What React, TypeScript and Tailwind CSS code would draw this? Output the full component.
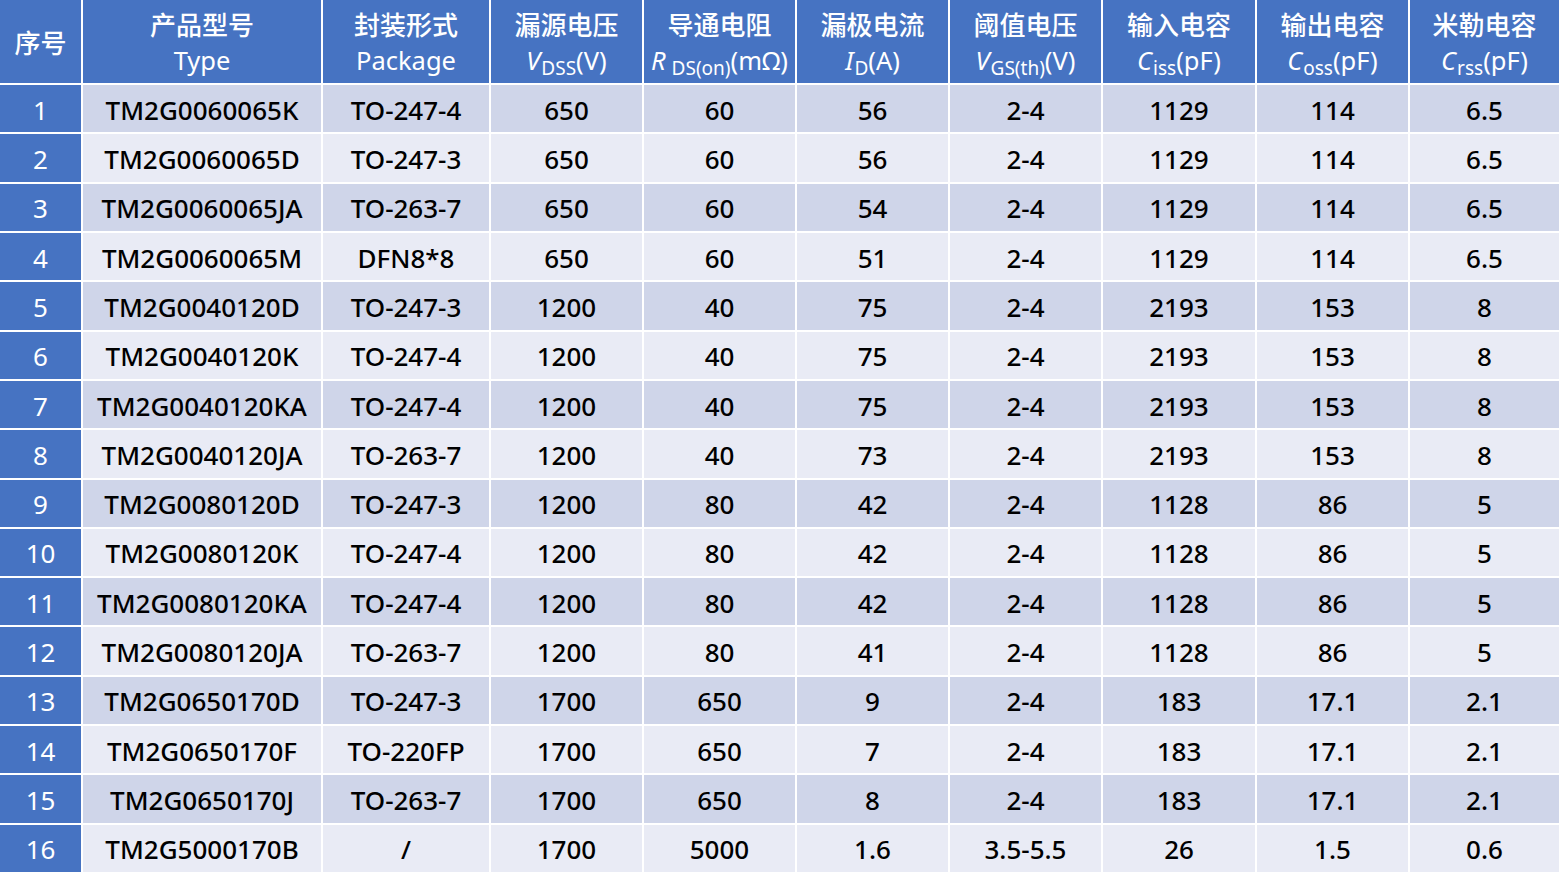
const ROWS: string[][] = [
  ['TM2G0060065K', 'TO-247-4', '650', '60', '56', '2-4', '1129', '114', '6.5'],
  ['TM2G0060065D', 'TO-247-3', '650', '60', '56', '2-4', '1129', '114', '6.5'],
  ['TM2G0060065JA', 'TO-263-7', '650', '60', '54', '2-4', '1129', '114', '6.5'],
  ['TM2G0060065M', 'DFN8*8', '650', '60', '51', '2-4', '1129', '114', '6.5'],
  ['TM2G0040120D', 'TO-247-3', '1200', '40', '75', '2-4', '2193', '153', '8'],
  ['TM2G0040120K', 'TO-247-4', '1200', '40', '75', '2-4', '2193', '153', '8'],
  ['TM2G0040120KA', 'TO-247-4', '1200', '40', '75', '2-4', '2193', '153', '8'],
  ['TM2G0040120JA', 'TO-263-7', '1200', '40', '73', '2-4', '2193', '153', '8'],
  ['TM2G0080120D', 'TO-247-3', '1200', '80', '42', '2-4', '1128', '86', '5'],
  ['TM2G0080120K', 'TO-247-4', '1200', '80', '42', '2-4', '1128', '86', '5'],
  ['TM2G0080120KA', 'TO-247-4', '1200', '80', '42', '2-4', '1128', '86', '5'],
  ['TM2G0080120JA', 'TO-263-7', '1200', '80', '41', '2-4', '1128', '86', '5'],
  ['TM2G0650170D', 'TO-247-3', '1700', '650', '9', '2-4', '183', '17.1', '2.1'],
  ['TM2G0650170F', 'TO-220FP', '1700', '650', '7', '2-4', '183', '17.1', '2.1'],
  ['TM2G0650170J', 'TO-263-7', '1700', '650', '8', '2-4', '183', '17.1', '2.1'],
  ['TM2G5000170B', '/', '1700', '5000', '1.6', '3.5-5.5', '26', '1.5', '0.6'],
];

function Sym({ s, sub, unit, gap }: { s: string; sub: string; unit: string; gap?: boolean }) {
  return (
    <span>
      <i className="mr-[1px]">{s}</i>
      <sub className={`text-[19px] ${gap ? 'ml-[5px]' : ''}`}>{sub}</sub>
      {unit}
    </span>
  );
}

const HEADERS: { cn: string; en: React.ReactNode }[] = [
  { cn: '产品型号', en: 'Type' },
  { cn: '封装形式', en: 'Package' },
  { cn: '漏源电压', en: <Sym s="V" sub="DSS" unit="(V)" /> },
  { cn: '导通电阻', en: <Sym s="R" sub="DS(on)" unit="(mΩ)" gap /> },
  { cn: '漏极电流', en: <Sym s="I" sub="D" unit="(A)" /> },
  { cn: '阈值电压', en: <Sym s="V" sub="GS(th)" unit="(V)" /> },
  { cn: '输入电容', en: <Sym s="C" sub="iss" unit="(pF)" /> },
  { cn: '输出电容', en: <Sym s="C" sub="oss" unit="(pF)" /> },
  { cn: '米勒电容', en: <Sym s="C" sub="rss" unit="(pF)" /> },
];

const cell = 'flex items-center justify-center border-r-2 border-b-2 border-white';

export default function App() {
  return (
    <div
      className="w-[1561px] h-[874px] overflow-hidden bg-white grid grid-cols-[83px_240px_168px_153px_153px_153px_153px_154px_153px_151px] grid-rows-[85px_repeat(16,49.3125px)]"
      style={{ fontFamily: '"Noto Sans", "Noto Sans CJK SC", sans-serif' }}
    >
      {/* header */}
      <div className={`${cell} bg-[#4673c2] text-white text-[26px] font-medium`}>
        <span style={{ fontFamily: '"Noto Sans CJK SC", sans-serif' }}>序号</span>
      </div>
      {HEADERS.map((h, i) => (
        <div key={i} className={`${cell} bg-[#4673c2] text-white flex-col leading-[37px]`}>
          <span className="text-[26px] font-medium" style={{ fontFamily: '"Noto Sans CJK SC", sans-serif' }}>
            {h.cn}
          </span>
          <span className="text-[25.5px] leading-[35px] pt-[1px]">{h.en}</span>
        </div>
      ))}

      {/* body */}
      {ROWS.map((r, ri) => {
        const bg = ri % 2 === 0 ? 'bg-[#cfd5e9]' : 'bg-[#e9ebf5]';
        return [
          <div key={`n${ri}`} className={`${cell} pt-[3px] bg-[#4673c2] text-white text-[26px]`}>
            {ri + 1}
          </div>,
          ...r.map((v, ci) => (
            <div key={`${ri}-${ci}`} className={`${cell} pt-[3px] ${bg} text-black text-[26px] font-medium`}>
              {v}
            </div>
          )),
        ];
      })}
    </div>
  );
}
